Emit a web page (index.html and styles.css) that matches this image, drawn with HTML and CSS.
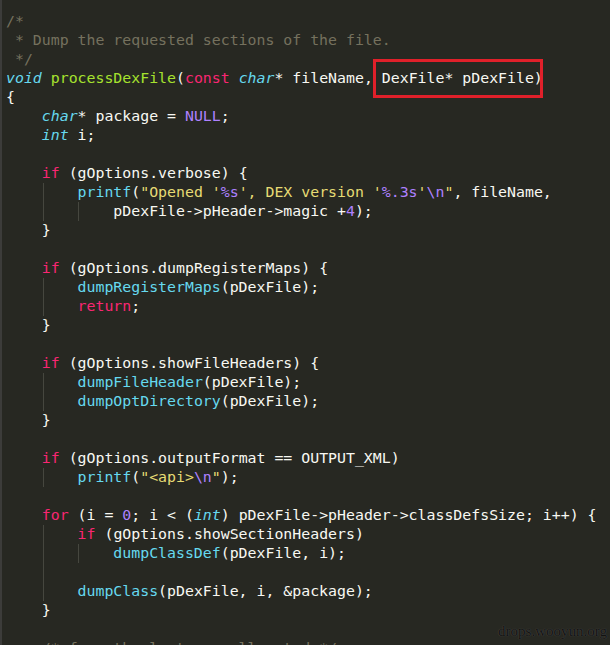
FILE: index.html
```html
<!DOCTYPE html>
<html>
<head>
<meta charset="utf-8">
<link rel="stylesheet" href="styles.css">
</head>
<body>
<div class="editor">
  <div class="code">
<div class="ln"><span class="c">/*</span></div>
<div class="ln"><span class="c"> * Dump the requested sections of the file.</span></div>
<div class="ln"><span class="c"> */</span></div>
<div class="ln"><span class="t">void</span> <span class="fn">processDexFile</span>(<span class="k">const</span> <span class="t">char</span>* fileName, DexFile* pDexFile)</div>
<div class="ln">{</div>
<div class="ln">    <span class="t">char</span>* package = <span class="n">NULL</span>;</div>
<div class="ln">    <span class="t">int</span> i;</div>
<div class="ln"></div>
<div class="ln">    <span class="k">if</span> (gOptions.verbose) {</div>
<div class="ln g1">        <span class="f">printf</span>(<span class="s">"Opened '</span><span class="n">%s</span><span class="s">', DEX version '</span><span class="n">%.3s</span><span class="s">'</span><span class="n">\n</span><span class="s">"</span>, fileName,</div>
<div class="ln g2">            pDexFile-&gt;pHeader-&gt;magic +<span class="n">4</span>);</div>
<div class="ln">    }</div>
<div class="ln"></div>
<div class="ln">    <span class="k">if</span> (gOptions.dumpRegisterMaps) {</div>
<div class="ln g1">        <span class="f">dumpRegisterMaps</span>(pDexFile);</div>
<div class="ln g1">        <span class="k">return</span>;</div>
<div class="ln">    }</div>
<div class="ln"></div>
<div class="ln">    <span class="k">if</span> (gOptions.showFileHeaders) {</div>
<div class="ln g1">        <span class="f">dumpFileHeader</span>(pDexFile);</div>
<div class="ln g1">        <span class="f">dumpOptDirectory</span>(pDexFile);</div>
<div class="ln">    }</div>
<div class="ln"></div>
<div class="ln">    <span class="k">if</span> (gOptions.outputFormat == OUTPUT_XML)</div>
<div class="ln g1">        <span class="f">printf</span>(<span class="s">"&lt;api&gt;</span><span class="n">\n</span><span class="s">"</span>);</div>
<div class="ln"></div>
<div class="ln">    <span class="k">for</span> (i = <span class="n">0</span>; i &lt; (<span class="t">int</span>) pDexFile-&gt;pHeader-&gt;classDefsSize; i++) {</div>
<div class="ln g1">        <span class="k">if</span> (gOptions.showSectionHeaders)</div>
<div class="ln g2">            <span class="f">dumpClassDef</span>(pDexFile, i);</div>
<div class="ln g1"></div>
<div class="ln g1">        <span class="f">dumpClass</span>(pDexFile, i, &amp;package);</div>
<div class="ln">    }</div>
<div class="ln"></div>
<div class="ln">    <span class="c">/* free the last one allocated */</span></div>
  </div>
  <div class="mark"></div>
  <div class="wm">drops.wooyun.org</div>
</div>
</body>
</html>
```

FILE: styles.css
```css
html, body {
  margin: 0;
  padding: 0;
  background: #272822;
}
body {
  width: 610px;
  height: 645px;
  overflow: hidden;
}
.editor {
  position: relative;
  width: 610px;
  height: 645px;
  box-sizing: border-box;
  border-left: 2px solid #3c3c3a;
  background: #272822;
  overflow: hidden;
}
.code {
  padding: 11.5px 0 0 4px;
  font-family: "DejaVu Sans Mono", "Liberation Mono", monospace;
  font-size: 14.87px;
  line-height: 19px;
  color: #f8f8f2;
}
.ln {
  height: 19px;
  white-space: pre;
}
.g1 {
  background: linear-gradient(#46473f, #46473f) no-repeat 37px 0 / 1px 100%;
}
.g2 {
  background:
    linear-gradient(#46473f, #46473f) no-repeat 37px 0 / 1px 100%,
    linear-gradient(#46473f, #46473f) no-repeat 72px 0 / 1px 100%;
}
.c { color: #75715e; }
.k { color: #f92672; }
.t { color: #66d9ef; font-style: italic; }
.fn { color: #a6e22e; }
.f { color: #66d9ef; }
.s { color: #e6db74; }
.n { color: #ae81ff; }
.mark {
  position: absolute;
  left: 371px;
  top: 59px;
  width: 170px;
  height: 39px;
  box-sizing: border-box;
  border: 3px solid #e0202a;
}
.wm {
  position: absolute;
  right: 3px;
  top: 622px;
  font-family: "Liberation Serif", serif;
  font-size: 15px;
  line-height: 18px;
  color: #121212;
  text-shadow: 0 0 1px rgba(130, 130, 130, 0.6);
}
```
